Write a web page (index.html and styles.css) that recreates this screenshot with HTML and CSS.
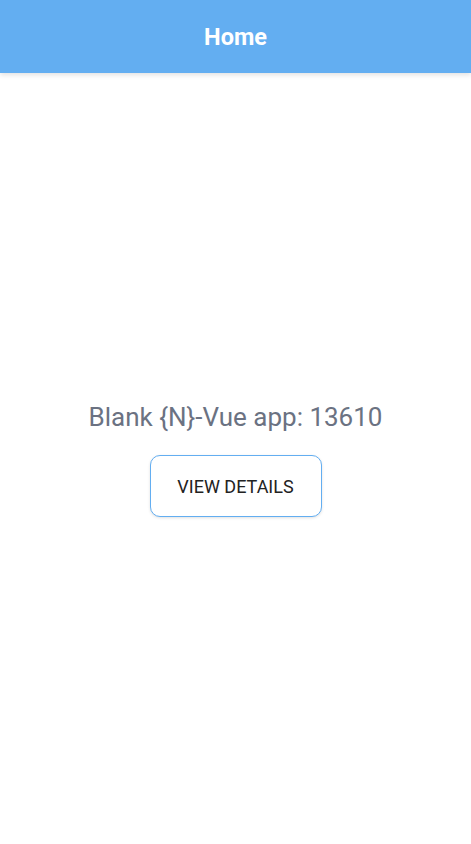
FILE: index.html
```html
<!DOCTYPE html>
<html>
<head>
<meta charset="utf-8">
<link rel="stylesheet" href="styles.css">
</head>
<body>
<div class="page">
  <header class="action-bar"><span class="title">Home</span></header>
  <main class="content">
    <div class="message">Blank {N}-Vue app: 13610</div>
    <button class="btn">VIEW DETAILS</button>
  </main>
</div>
</body>
</html>
```
FILE: styles.css
```css
html, body { margin: 0; padding: 0; height: 100%; background: #fff; }
body { font-family: Roboto, "Noto Sans", sans-serif; }
.page { display: flex; flex-direction: column; height: 100vh; }
.action-bar {
  height: 73px;
  flex: none;
  background: #63aef1;
  display: flex;
  align-items: center;
  justify-content: center;
  box-shadow: 0 2px 5px rgba(0,0,0,0.12);
  position: relative;
  z-index: 1;
  padding-top: 1px;
  box-sizing: border-box;
}
.title { color: #fff; font-weight: bold; font-size: 23.5px; }
.content {
  flex: 1;
  display: flex;
  flex-direction: column;
  align-items: center;
  justify-content: center;
  padding-top: 2px;
}
.message { color: #6b7282; font-size: 26px; line-height: 30px; }
.btn {
  margin-top: 23px;
  width: 172px;
  height: 62px;
  background: #fff;
  border: 1px solid #63aef1;
  border-radius: 10px;
  font-family: Roboto, sans-serif;
  font-size: 18px;
  font-weight: 400;
  color: #222;
  box-shadow: 0 1px 3px rgba(0,0,0,0.12);
}
```
